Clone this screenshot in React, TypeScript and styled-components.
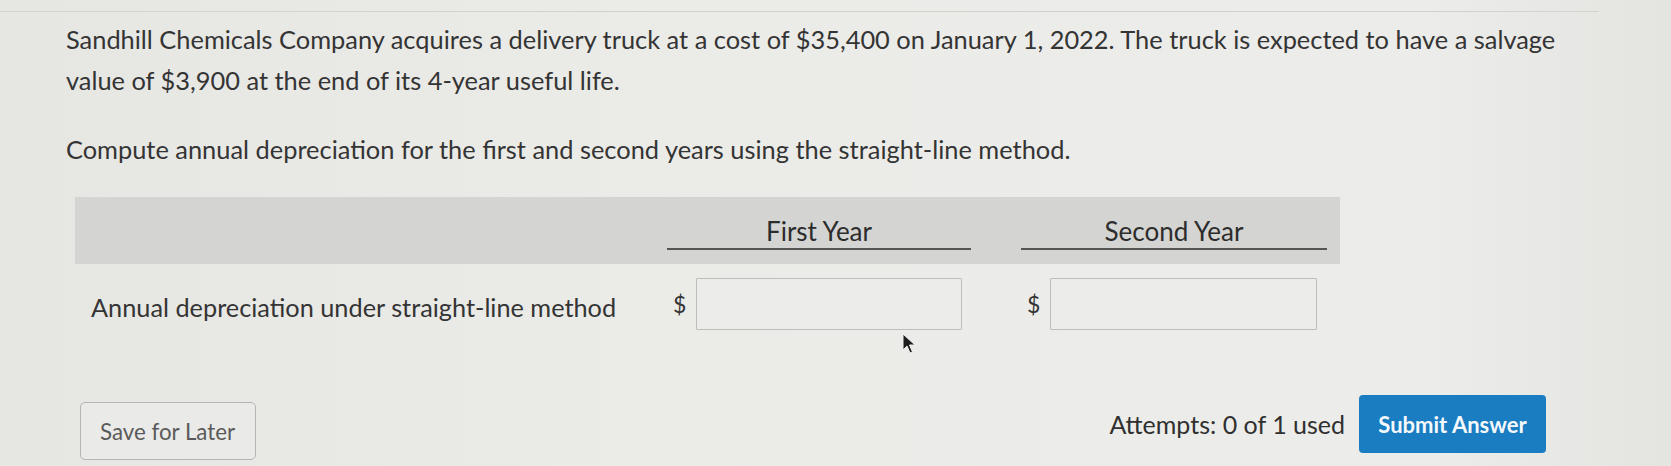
import styled, { createGlobalStyle } from "styled-components";

const GlobalStyle = createGlobalStyle`
  html, body {
    margin: 0;
    padding: 0;
    background: #e9e9e6;
  }
  body {
    font-family: Lato, "Open Sans", "Liberation Sans", sans-serif;
    color: #343434;
  }
`;

const Page = styled.div`
  position: relative;
  width: 1671px;
  height: 466px;
  overflow: hidden;
  background: linear-gradient(90deg, #e6e6e3 0%, #ebebe8 40%, #ececea 85%, #e4e4e1 100%);
`;

const Card = styled.div`
  margin: 11px 72px 0 0;
  padding: 7px 0 0 66px;
  border-top: 1px solid #d2d2cf;
`;

const Paragraph = styled.p`
  margin: 0;
  font-size: 25.4px;
  line-height: 41px;
  width: 1515px;
  & + & {
    margin-top: 28px;
  }
`;

const Table = styled.div`
  margin: 27px 0 0 9px;
  width: 1265px;
`;

const HeaderRow = styled.div`
  display: grid;
  grid-template-columns: 592px 304px 50px 306px;
  height: 67px;
  background: #d4d4d2;
`;

const HeaderCell = styled.div<{ col: number }>`
  grid-column: ${(p) => p.col};
  align-self: start;
  margin-top: 20px;
  padding-bottom: 3px;
  border-bottom: 2px solid #555;
  text-align: center;
  font-size: 26px;
  line-height: 28px;
  color: #2c2c2c;
`;

const BodyRow = styled.div`
  display: grid;
  grid-template-columns: 592px 304px 50px 306px;
  align-items: center;
  padding-top: 14px;
`;

const RowLabel = styled.div`
  padding-left: 16px;
  padding-top: 6px;
  font-size: 25.3px;
`;

const AmountCell = styled.div<{ col: number }>`
  grid-column: ${(p) => p.col};
  display: flex;
  align-items: center;
`;

const Currency = styled.span`
  width: 29px;
  padding-left: 6px;
  box-sizing: border-box;
  font-size: 23px;
`;

const AmountInput = styled.input<{ wide?: boolean }>`
  width: ${(p) => (p.wide ? 267 : 266)}px;
  height: 52px;
  box-sizing: border-box;
  border: 1.5px solid #bdbdbb;
  border-radius: 1px;
  background: #ececea;
  font-family: inherit;
  font-size: 20px;
  outline: none;
`;

const Footer = styled.div`
  display: flex;
  align-items: center;
  justify-content: space-between;
  width: 1466px;
  margin: 58px 0 0 14px;
`;

const SaveButton = styled.button`
  width: 176px;
  height: 58px;
  margin-top: 14px;
  padding-left: 19px;
  border: 1.5px solid #b5b5b3;
  border-radius: 5px;
  background: #eaeae8;
  color: #5a5a5a;
  font-family: inherit;
  font-size: 22.3px;
  text-align: left;
`;

const SubmitGroup = styled.div`
  display: flex;
  align-items: center;
  gap: 14px;
`;

const Attempts = styled.span`
  font-size: 25px;
  color: #303030;
`;

const SubmitButton = styled.button`
  width: 187px;
  height: 58px;
  border: none;
  border-radius: 4px;
  background: #1a7cc1;
  color: #f4f8fb;
  font-family: inherit;
  font-weight: 700;
  font-size: 22px;
`;

const Pointer = styled.svg`
  position: absolute;
  left: 902px;
  top: 333px;
`;

export default function App() {
  return (
    <>
      <GlobalStyle />
      <Page>
        <Card>
          <Paragraph>
            Sandhill Chemicals Company acquires a delivery truck at a cost of $35,400 on January 1, 2022. The truck is expected to have a salvage value of $3,900 at the end of its 4-year useful life.
          </Paragraph>
          <Paragraph>
            Compute annual depreciation for the first and second years using the straight-line method.
          </Paragraph>
          <Table>
            <HeaderRow>
              <HeaderCell col={2}>First Year</HeaderCell>
              <HeaderCell col={4}>Second Year</HeaderCell>
            </HeaderRow>
            <BodyRow>
              <RowLabel>Annual depreciation under straight-line method</RowLabel>
              <AmountCell col={2}>
                <Currency>$</Currency>
                <AmountInput />
              </AmountCell>
              <AmountCell col={4}>
                <Currency>$</Currency>
                <AmountInput wide />
              </AmountCell>
            </BodyRow>
          </Table>
          <Footer>
            <SaveButton>Save for Later</SaveButton>
            <SubmitGroup>
              <Attempts>Attempts: 0 of 1 used</Attempts>
              <SubmitButton>Submit Answer</SubmitButton>
            </SubmitGroup>
          </Footer>
        </Card>
        <Pointer width="16" height="22" viewBox="0 0 16 22">
          <path d="M1 1 L1 17 L5 13 L8 20 L10.5 19 L7.5 12 L13 12 Z" fill="#1e1e1e" stroke="#f0f0f0" strokeWidth="1" />
        </Pointer>
      </Page>
    </>
  );
}
